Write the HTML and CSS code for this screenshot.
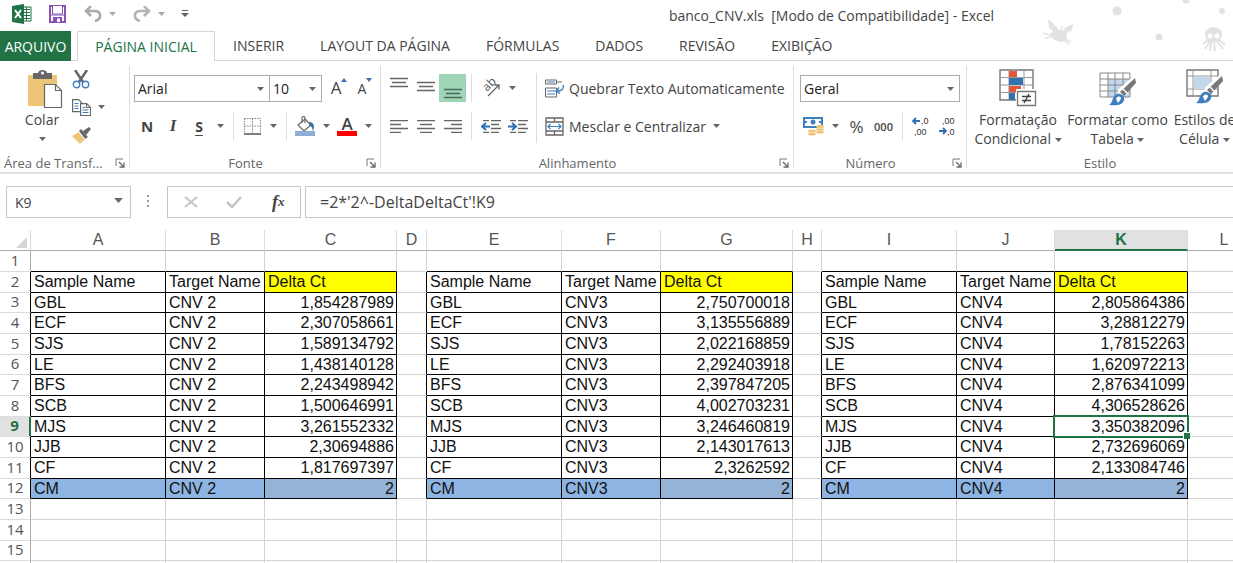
FILE: index.html
```html
<!DOCTYPE html>
<html lang="pt-BR">
<head>
<meta charset="utf-8">
<title>banco_CNV.xls - Excel</title>
<link rel="stylesheet" href="styles.css">
</head>
<body>
<svg class="defs" aria-hidden="true">
  <symbol id="caret" viewBox="0 0 7 4"><path d="M0 0h7L3.500 4z" fill="currentColor"/></symbol>
  <symbol id="launch" viewBox="0 0 10 10"><path d="M1 8V1h7" fill="none" stroke="#777" /><path d="M4 4l4 4M9 4.500V9H4.500" fill="none" stroke="#666" stroke-width="1.300"/></symbol>
  <symbol id="brush" viewBox="0 0 28 28"><path d="M27 0L12 14l4 4L28 5z" fill="#777"/><path d="M15 11l5 5" stroke="#fff" stroke-width="1.500"/><path d="M1 27c4-2 3-9 8-11 4-1 8 2 7 6-1 5-8 6-15 5z" fill="#3f7fbf"/><path d="M8 21c1-3 4-3 5-1 0 2-2 3-3 5z" fill="#fff"/></symbol>
</svg>

<header class="titlebar">
  <div class="quick">
    <svg class="q-logo" width="20" height="20" viewBox="0 0 20 20"><path d="M11 3h8v14h-8z" fill="#fff" stroke="#217346"/><path d="M11 5.500h7M11 8.500h7M11 11.500h7M11 14.500h7" stroke="#217346"/><path d="M14.500 3v14" stroke="#217346"/><path d="M0 2l12-2v20L0 18z" fill="#217346"/><path d="M3 6l6 8M9 6l-6 8" stroke="#fff" stroke-width="2"/></svg>
    <button class="q-save" aria-label="Salvar"><svg width="17" height="18" viewBox="0 0 17 18"><path d="M1 1h15v16H1z" fill="#fff" stroke="#8a52b3" stroke-width="2"/><path d="M3.500 1v8h10V1" fill="#fff" stroke="#8a52b3"/><path d="M1 10h15" stroke="#8a52b3"/><path d="M4 12h9v5H4z" fill="#8a52b3"/><path d="M8 13.500h3V17H8z" fill="#fff"/></svg></button>
    <button class="q-undo" aria-label="Desfazer"><svg width="18" height="16" viewBox="0 0 18 16"><path d="M7 0L2 5l5 5M2 5h8c8 0 8 8 1 10" fill="none" stroke="#aaa" stroke-width="2.600"/></svg><svg class="caret"><use href="#caret"/></svg></button>
    <button class="q-redo" aria-label="Refazer"><svg width="18" height="16" viewBox="0 0 18 16"><path d="M11 0l5 5-5 5M16 5H8C0 5 0 13 7 15" fill="none" stroke="#b4b4b4" stroke-width="2.600"/></svg><svg class="caret"><use href="#caret"/></svg></button>
    <button class="q-more" aria-label="Personalizar"><svg width="8" height="8" viewBox="0 0 8 8"><path d="M1 .500h6" stroke="#666"/><path d="M0 3h8L4 7z" fill="#666"/></svg></button>
  </div>
  <div class="title">banco_CNV.xls&nbsp; [Modo de Compatibilidade] - Excel</div>
  <svg class="doodle" width="193" height="60" viewBox="0 0 193 60" fill="#e2e2e2">
    <circle cx="77" cy="11" r="4.500"/><circle cx="146" cy="0" r="3.500"/><circle cx="182" cy="11" r="3"/><circle cx="119" cy="37" r="3.500"/>
    <path d="M10 35c2-5 10-7 16-3l1 7c-3 4-12 4-17-4z"/><path d="M15 31l-5-3-1-7 4 3 2 4zM24 31l2-3 6-3-1 5-6 3zM17 30l-1-4M21 30l1-4M10 35l-7-2M11 37l-6 1M25 39l6 3M23 40l6 4" stroke="#e2e2e2" stroke-width="1.500"/>
    <path d="M165 34c0-9 17-9 17 0 0 5-3 7-4 8h-9c-2-1-4-4-4-8z"/><path d="M169 41c0 5-3 5-4 8M171 42l-1 9M174 42l1 9M177 41c2 5 5 4 6 8M179 40l6 5M168 40l-5 4" fill="none" stroke="#e2e2e2" stroke-width="2"/><circle cx="170" cy="36" r="2.500" fill="#fff"/><circle cx="177" cy="36" r="2.500" fill="#fff"/>
  </svg>
</header>

<nav class="tabs">
  <button class="tab file">ARQUIVO</button>
  <button class="tab active">PÁGINA INICIAL</button>
  <button class="tab">INSERIR</button>
  <button class="tab">LAYOUT DA PÁGINA</button>
  <button class="tab">FÓRMULAS</button>
  <button class="tab">DADOS</button>
  <button class="tab">REVISÃO</button>
  <button class="tab">EXIBIÇÃO</button>
</nav>

<section class="ribbon">
  <div class="group clipboard">
    <div class="body clip-body">
      <button class="paste">
        <svg width="36" height="39" viewBox="0 0 36 39"><path d="M1 5h29v31H1z" fill="#eec477"/><path d="M6 3h5c0-4 9-4 9 0h5v6H6z" fill="#666"/><circle cx="15.500" cy="3" r="1.500" fill="#fff"/><path d="M17.500 14.500h11l6 6v17h-17z" fill="#fff" stroke="#666" stroke-width="1.200"/><path d="M28.500 14.500v6h6" fill="none" stroke="#666" stroke-width="1.200"/></svg>
        <span>Colar</span>
        <svg class="caret"><use href="#caret"/></svg>
      </button>
      <div class="clip-side">
        <button aria-label="Recortar"><svg width="18" height="19" viewBox="0 0 18 19"><path d="M3 0l8 12M15 0L7 12" stroke="#666" stroke-width="2.500"/><circle cx="4.500" cy="14.500" r="3.200" fill="#fff" stroke="#3f7fbf" stroke-width="1.400"/><circle cx="13.500" cy="14.500" r="3.200" fill="#fff" stroke="#3f7fbf" stroke-width="1.400"/></svg></button>
        <button aria-label="Copiar"><svg width="19" height="17" viewBox="0 0 19 17"><path d="M.600 .600h6l3 3v9h-9z" fill="#fff" stroke="#666" stroke-width="1.200"/><path d="M2.500 4.500h4M2.500 7h4M2.500 9.500h4" stroke="#3f7fbf"/><path d="M8.600 4.600h6l4 4v8h-10z" fill="#fff" stroke="#666" stroke-width="1.200"/><path d="M14.500 4.600v4h4" fill="none" stroke="#666"/><path d="M10.500 8.500h3M10.500 11h6M10.500 13.500h6" stroke="#3f7fbf"/></svg><svg class="caret"><use href="#caret"/></svg></button>
        <button aria-label="Pincel de Formatação"><svg width="19" height="17" viewBox="0 0 19 17"><path d="M0 9l7-4 6 7-5 5z" fill="#eec477"/><path d="M7 4l2-2 7 8-3 2z" fill="#666"/><path d="M11 4l6-4 2 2-5 6z" fill="#666"/><path d="M6.500 4.800l6.500 7.500" stroke="#fff"/></svg></button>
      </div>
    </div>
    <div class="caption left"><span>Área de Transf...</span><button class="launch" aria-label="Mais"><svg width="10" height="10"><use href="#launch"/></svg></button></div>
  </div>

  <div class="group font">
    <div class="body rows">
      <div class="row">
        <label class="combo face"><select aria-label="Fonte"><option>Arial</option></select><svg class="caret"><use href="#caret"/></svg></label>
        <label class="combo size"><select aria-label="Tamanho"><option>10</option></select><svg class="caret"><use href="#caret"/></svg></label>
        <button class="w26 after-combo" aria-label="Aumentar"><span class="grow">A</span><svg class="tri" width="6" height="4" viewBox="0 0 6 4"><path d="M0 4h6L3 0z" fill="#3f6fa8"/></svg></button>
        <button class="w26" aria-label="Diminuir"><span class="shrink">A</span><svg class="tri" width="6" height="4" viewBox="0 0 6 4"><path d="M0 0h6L3 4z" fill="#3f6fa8"/></svg></button>
      </div>
      <div class="row">
        <button class="w26 bold">N</button><button class="w26 ital">I</button><button class="w26 under">S</button>
        <button class="drop" aria-label="Sublinhado"><svg class="caret"><use href="#caret"/></svg></button>
        <i class="sep"></i>
        <button class="w26" aria-label="Bordas"><svg width="17" height="17" viewBox="0 0 17 17"><path d="M.500 .500h16v15M.500 .500v15M8.500 .500v15M.500 8h16" fill="none" stroke="#888" stroke-dasharray="1.500 1"/><path d="M0 16h17" stroke="#555" stroke-width="1.500"/></svg></button>
        <button class="drop" aria-label="Opções de borda"><svg class="caret"><use href="#caret"/></svg></button>
        <i class="sep"></i>
        <button class="w26" aria-label="Cor de preenchimento"><svg width="20" height="20" viewBox="0 0 20 20"><path d="M3 9l7-6 6 6-7 6z" fill="#fff" stroke="#666" stroke-width="1.200"/><path d="M7 7V2c0-2 3-2 3 0v5" fill="none" stroke="#666" stroke-width="1.200"/><path d="M14 6c5 0 6 4 4 9-1-4-2-5-4-6z" fill="#3f6fa8"/><path d="M0 15h20v5H0z" fill="#8eaed6"/></svg></button>
        <button class="drop" aria-label="Cores"><svg class="caret"><use href="#caret"/></svg></button>
        <button class="w26 fontcolor" aria-label="Cor da fonte"><span>A</span></button>
        <button class="drop" aria-label="Cores da fonte"><svg class="caret"><use href="#caret"/></svg></button>
      </div>
    </div>
    <div class="caption"><span>Fonte</span><button class="launch" aria-label="Mais"><svg width="10" height="10"><use href="#launch"/></svg></button></div>
  </div>

  <div class="group align">
    <div class="body align-body">
      <div class="rows">
        <div class="row">
          <button class="w27" aria-label="Em cima"><svg width="18" height="24" viewBox="0 0 18 24"><path d="M0 2.500h18M2 6.500h14M0 10.500h18" stroke="#666" stroke-width="1.300"/></svg></button>
          <button class="w27" aria-label="No meio"><svg width="18" height="24" viewBox="0 0 18 24"><path d="M0 6.500h18M2 10.500h14M0 14.500h18" stroke="#666" stroke-width="1.300"/></svg></button>
          <button class="w27 on" aria-label="Embaixo"><svg width="18" height="24" viewBox="0 0 18 24"><path d="M0 13.500h18M2 17.500h14M0 21.500h18" stroke="#4a6a57" stroke-width="1.300"/></svg></button>
          <i class="sep"></i>
          <button class="w27" aria-label="Orientação"><svg width="24" height="26" viewBox="0 0 24 26"><text x="0" y="0" class="ab" transform="translate(8 17) rotate(-45)">ab</text><path d="M9 21L20 10M15.500 10H20v4.500" fill="none" stroke="#666" stroke-width="1.300"/></svg></button>
          <button class="drop" aria-label="Orientações"><svg class="caret"><use href="#caret"/></svg></button>
        </div>
        <div class="row">
          <button class="w27" aria-label="À esquerda"><svg width="18" height="13" viewBox="0 0 18 13"><path d="M0 .700h18M0 4.500h11M0 8.500h18M0 12.300h11" stroke="#666" stroke-width="1.300"/></svg></button>
          <button class="w27" aria-label="Centralizar"><svg width="18" height="13" viewBox="0 0 18 13"><path d="M0 .700h18M3 4.500h12M0 8.500h18M3 12.300h12" stroke="#666" stroke-width="1.300"/></svg></button>
          <button class="w27" aria-label="À direita"><svg width="18" height="13" viewBox="0 0 18 13"><path d="M0 .700h18M7 4.500h11M0 8.500h18M7 12.300h11" stroke="#666" stroke-width="1.300"/></svg></button>
          <i class="sep"></i>
          <button class="w27" aria-label="Diminuir recuo"><svg width="20" height="13" viewBox="0 0 20 13"><path d="M2 .700h6M10 .700h10M10 4.500h8M10 8.500h10M2 12.300h6M10 12.300h8" stroke="#666" stroke-width="1.300"/><path d="M9 6.500H1M5 3L1 6.500 5 10" fill="none" stroke="#2f6fb5" stroke-width="2"/></svg></button>
          <button class="w27" aria-label="Aumentar recuo"><svg width="20" height="13" viewBox="0 0 20 13"><path d="M2 .700h6M10 .700h10M10 4.500h8M10 8.500h10M2 12.300h6M10 12.300h8" stroke="#666" stroke-width="1.300"/><path d="M0 6.500h8M4 3l4 3.500L4 10" fill="none" stroke="#2f6fb5" stroke-width="2"/></svg></button>
        </div>
      </div>
      <div class="rows wide">
        <div class="row"><button class="text"><svg width="20" height="19" viewBox="0 0 20 19"><path d="M.500 1h11v4H.500zM.500 9h11v9H.500z" fill="#fff" stroke="#666"/><path d="M11 3h6" stroke="#666"/><path d="M2 3h8M2 12h8M2 15h8" stroke="#3f7fbf"/><path d="M18.500 6c0 5-2 6-7 6M14 8.500L11 12l4 2.500" fill="none" stroke="#3f7fbf" stroke-width="1.400"/></svg>Quebrar Texto Automaticamente</button></div>
        <div class="row"><button class="text"><svg width="20" height="19" viewBox="0 0 20 19"><path d="M1 1h17v17H1zM1 5h17M1 14h17M9.500 1v4M9.500 14v4" fill="#fff" stroke="#666" stroke-width="1.300"/><path d="M3 9.500h13M5.500 7L3 9.500 5.500 12M13.500 7L16 9.500 13.500 12" fill="none" stroke="#3f7fbf" stroke-width="1.200"/></svg>Mesclar e Centralizar</button><button class="drop" aria-label="Mesclar"><svg class="caret"><use href="#caret"/></svg></button></div>
      </div>
    </div>
    <div class="caption"><span>Alinhamento</span><button class="launch" aria-label="Mais"><svg width="10" height="10"><use href="#launch"/></svg></button></div>
  </div>

  <div class="group number">
    <div class="body rows">
      <div class="row"><label class="combo format"><select aria-label="Formato"><option>Geral</option></select><svg class="caret"><use href="#caret"/></svg></label></div>
      <div class="row inset">
        <button class="w27" aria-label="Moeda"><svg width="21" height="19" viewBox="0 0 21 19"><path d="M1 1h18v9H1z" fill="#fff" stroke="#3f7fbf" stroke-width="2"/><circle cx="10" cy="5" r="2.500" fill="#3f7fbf"/><path d="M2 5h2M16 5h2" stroke="#3f7fbf" stroke-width="2"/><path d="M14 8h7v8h-7zM5 12h9v7H5z" fill="#fff"/><ellipse cx="17" cy="9.500" rx="4" ry="1.700" fill="#eec477"/><ellipse cx="17" cy="12.500" rx="4" ry="1.300" fill="#eec477"/><ellipse cx="17" cy="15.200" rx="4" ry="1.300" fill="#eec477"/><ellipse cx="9" cy="14" rx="4" ry="1.500" fill="#eec477"/><ellipse cx="9" cy="17.200" rx="4" ry="1.400" fill="#eec477"/></svg></button>
        <button class="drop" aria-label="Moedas"><svg class="caret"><use href="#caret"/></svg></button>
        <button class="w27 pct">%</button><button class="w27 zeros">000</button>
        <i class="sep"></i>
        <button class="w27" aria-label="Aumentar casas decimais"><svg width="20" height="24" viewBox="0 0 20 24"><path d="M8 7H1M4 4L1 7l3 3" fill="none" stroke="#2f6fb5" stroke-width="1.800"/><text x="9" y="10" class="dec">,0</text><text x="2" y="21" class="dec">,00</text></svg></button>
        <button class="w27" aria-label="Diminuir casas decimais"><svg width="20" height="24" viewBox="0 0 20 24"><path d="M0 17h7M4 14l3 3-3 3" fill="none" stroke="#2f6fb5" stroke-width="1.800"/><text x="3" y="10" class="dec">,00</text><text x="8" y="21" class="dec">,0</text></svg></button>
      </div>
    </div>
    <div class="caption"><span>Número</span><button class="launch" aria-label="Mais"><svg width="10" height="10"><use href="#launch"/></svg></button></div>
  </div>

  <div class="group style">
    <div class="body style-body">
      <button class="big b1"><svg width="38" height="38" viewBox="0 0 38 38"><path d="M1 1h33v30H1z" fill="#fff" stroke="#777" stroke-width="1.400"/><path d="M1 8.500h33M1 16h33M1 23.500h33M10 1v30M25 1v30" stroke="#999"/><path d="M10 2h8v6h-8zM10 17h12v6H10z" fill="#e0573a"/><path d="M10 9h14v7H10zM10 24h6v7h-6z" fill="#3572b0"/><path d="M17 20h21v18H17z" fill="#fff"/><path d="M18.500 22.500h18v14h-18z" fill="#fff" stroke="#777" stroke-width="1.300"/><path d="M23 27.500h9M23 31.500h9M30 25l-5 9" stroke="#444" stroke-width="1.500"/></svg><span>Formatação<br>Condicional <svg class="caret"><use href="#caret"/></svg></span></button>
      <button class="big b2"><svg width="38" height="38" viewBox="0 0 38 38"><path d="M1 4h30v24H1z" fill="#fff"/><path d="M9 10h22v18H9z" fill="#c3d7ec"/><path d="M1 4h30v24H1zM1 10h30M1 16h30M1 22h30M9 4v24M16 4v24M24 4v24" fill="none" stroke="#888"/><path d="M36 10L22 22l-2 8" fill="none" stroke="#fff" stroke-width="6"/><use href="#brush" x="9" y="9" width="28" height="28"/></svg><span>Formatar como<br>Tabela <svg class="caret"><use href="#caret"/></svg></span></button>
      <button class="big b3"><svg width="38" height="38" viewBox="0 0 38 38"><path d="M1 1h31v26H1z" fill="#fff" stroke="#777" stroke-width="1.400"/><path d="M1 7h31M1 20h31M7 1v26M25 1v26" stroke="#999"/><path d="M8 8h16v12H8z" fill="#c3d7ec"/><path d="M36 8L22 20l-2 8" fill="none" stroke="#fff" stroke-width="6"/><use href="#brush" x="9" y="7" width="28" height="28"/></svg><span>Estilos de<br>Célula <svg class="caret"><use href="#caret"/></svg></span></button>
    </div>
    <div class="caption"><span>Estilo</span></div>
  </div>
</section>

<section class="formula-bar">
  <label class="namebox"><input value="K9" aria-label="Caixa de nome"><svg class="caret"><use href="#caret"/></svg></label>
  <svg class="dots" width="3" height="14" viewBox="0 0 3 14" fill="#999"><path d="M0 0h2v2H0zM0 5h2v2H0zM0 10h2v2H0z"/></svg>
  <div class="fx-box">
    <button aria-label="Cancelar"><svg width="14" height="12" viewBox="0 0 14 12"><path d="M1 1l12 10M13 1L1 11" stroke="#c4c4c4" stroke-width="2"/></svg></button>
    <button aria-label="Inserir"><svg width="16" height="12" viewBox="0 0 16 12"><path d="M1 6l5 5L15 1" fill="none" stroke="#c4c4c4" stroke-width="2.500"/></svg></button>
    <button class="fx" aria-label="Inserir função"><i>f</i><sub>x</sub></button>
  </div>
  <input class="formula" value="=2*'2^-DeltaDeltaCt'!K9" aria-label="Barra de fórmulas">
</section>

<main class="sheet"><table id="grid"></table></main>
<script src="grid.js"></script>
</body>
</html>
```

FILE: styles.css
```css
* { box-sizing: border-box; }
body { margin: 0; background: #fff; color: #444; font: 14px "Open Sans", "Noto Sans", sans-serif; overflow: hidden; height: 100vh; display: flex; flex-direction: column; }
button { border: 0; margin: 0; padding: 0; background: none; color: inherit; font: inherit; display: flex; align-items: center; justify-content: center; flex: none; }
svg { flex: none; display: block; }
.defs { position: absolute; width: 0; height: 0; }
.caret { width: 7px; height: 4px; color: #666; }

.titlebar { position: relative; height: 31px; display: flex; align-items: center; flex: none; }
.quick { width: 430px; display: flex; align-items: center; padding: 0 0 4px 12px; flex: none; }
.quick button { gap: 7px; color: #aaa; }
.quick .caret { color: #aaa; }
.quick .q-save { margin-left: 17px; }
.quick .q-undo { margin-left: 18px; }
.quick .q-redo { margin-left: 17px; }
.quick .q-more { margin-left: 16px; }
.title { flex: 1; text-align: center; white-space: nowrap; }
.doodle { position: absolute; right: 0; top: 0; z-index: -1; }

.tabs { display: flex; height: 30px; border-bottom: 1px solid #d5d5d5; flex: none; }
.tab { padding: 0 18px; white-space: nowrap; height: 29px; }
.tab.file { width: 71px; padding: 0; background: #217346; color: #fff; height: 30px; margin-right: 6px; }
.tab.active { width: 138px; padding: 0; color: #217346; background: #fff; border: 1px solid #d5d5d5; border-bottom: 0; height: 30px; }

.ribbon { display: flex; height: 113px; border-bottom: 2px solid #e1e1e1; flex: none; }
.group { display: flex; flex-direction: column; position: relative; flex: none; padding-top: 4px; }
.group:not(.style)::after { content: ""; position: absolute; right: 0; top: 5px; bottom: 4px; width: 1px; background: #dcdcdc; }
.body { height: 89px; }
.caption { display: flex; align-items: center; height: 18px; color: #666; font-size: 13px; white-space: nowrap; }
.caption span { flex: 1; text-align: center; }
.caption.left span { text-align: left; padding-left: 4px; }
.launch { width: 20px; height: 18px; }
.clipboard { width: 130px; }
.font { width: 251px; }
.align { width: 413px; }
.number { width: 173px; }
.style { flex: 1; min-width: 0; overflow: hidden; }
.rows { padding: 4px 0 0 4px; }
.row { display: flex; align-items: center; height: 38px; }
.inset { padding-left: 2px; }
.sep { width: 1px; height: 28px; background: #dcdcdc; margin: 0 5px; flex: none; }
.w26 { width: 26px; height: 28px; }
.w27 { width: 27px; height: 28px; }
.drop { width: 16px; height: 28px; }

.clip-body { display: flex; padding-left: 14px; }
.paste { flex-direction: column; width: 56px; justify-content: flex-start; padding-top: 5px; }
.paste svg:first-child { margin-left: 6px; }
.paste span { line-height: 22px; }
.paste .caret { margin-top: 6px; }
.clip-side { display: flex; flex-direction: column; padding: 0 0 0 2px; }
.clip-side button { height: 28px; gap: 7px; justify-content: flex-start; }

.combo { position: relative; display: block; height: 27px; color: #222; }
.combo select { appearance: none; width: 100%; height: 100%; border: 1px solid #ababab; border-radius: 0; background: #fff; font: inherit; color: inherit; padding: 0 3px; }
.combo .caret { position: absolute; right: 6px; top: 12px; }
.face { width: 136px; }
.size { width: 53px; margin-left: -1px; }
.format { width: 160px; margin-left: 2px; }
.after-combo { margin-left: 4px; }
.grow { font-size: 17px; line-height: 20px; }
.shrink { font-size: 14px; }
.tri { align-self: flex-start; margin-top: 4px; }
.bold { font-weight: 700; font-size: 15px; }
.ital { font: italic 700 17px "Liberation Serif", serif; }
.under { font-weight: 700; text-decoration: underline; text-underline-offset: 3px; }
.fontcolor span { font-weight: 600; font-size: 17px; line-height: 15px; border-bottom: 5px solid #f00; width: 20px; }
.on { background: #9fd5b7; }
.ab { font: 12px "Open Sans", sans-serif; fill: #555; }
.dec { font: 9px "Liberation Sans", sans-serif; fill: #333; }
.pct { font-size: 17px; }
.zeros { font-size: 11px; font-weight: 600; }
.align-body { display: flex; }
.align-body .rows:first-child { width: 155px; }
.align-body .rows.wide { position: relative; padding-left: 9px; }
.wide::before { content: ""; position: absolute; left: 0; top: 8px; height: 70px; width: 1px; background: #dcdcdc; }
.text { gap: 4px; white-space: nowrap; }
.wide .drop { margin-left: 3px; }
.style-body { display: flex; padding-left: 4px; }
.big { flex-direction: column; justify-content: flex-start; padding-top: 4px; line-height: 19px; white-space: nowrap; }
.big span { margin-top: 3px; }
.big span .caret { display: inline-block; vertical-align: middle; }
.b1 { width: 94px; }
.b2 { width: 105px; }
.b3 { width: 69px; }

.formula-bar { display: flex; align-items: center; height: 56px; padding: 0 0 0 6px; flex: none; }
.namebox { position: relative; width: 125px; height: 32px; }
.namebox input, .formula, .fx-box { height: 32px; border: 1px solid #c6c6c6; background: #fff; font: inherit; color: inherit; }
.namebox input { width: 100%; padding: 0 8px; }
.namebox .caret { position: absolute; right: 8px; top: 12px; width: 9px; height: 5px; }
.dots { margin: 0 17px 0 16px; }
.fx-box { width: 134px; display: flex; justify-content: space-around; align-items: center; padding: 0 0 0 1px; }
.fx-box button { width: 40px; }
.fx i { font: italic 700 18px "Liberation Serif", serif; }
.fx sub { font: italic 700 13px "Liberation Serif", serif; }
.formula-bar .formula { flex: 1; min-width: 0; margin-left: 4px; padding: 0 14px; border-right: 0; font-size: 16px; }

.sheet { flex: 1; min-height: 0; overflow: hidden; }
#grid { border-collapse: separate; border-spacing: 0; table-layout: fixed; width: 1261px; font: 16px "Liberation Sans", Arial, sans-serif; color: #111; }
#grid th { font-weight: 400; color: #555; padding: 0; border-right: 1px solid #dcdcdc; border-bottom: 1px solid #ababab; }
#grid thead tr { height: 21px; }
#grid tbody tr { height: 21px; line-height: 18px; }
#grid tbody tr:nth-child(3n) { height: 20px; }
#grid tbody th { font: 15px "Open Sans", sans-serif; line-height: 17px; padding-bottom: 2px; border-right-color: #ababab; border-bottom-color: #dcdcdc; }
#grid td { padding: 0 3px; border-right: 1px solid #d4d4d4; border-bottom: 1px solid #d4d4d4; white-space: nowrap; }
#grid td.box { border-right-color: #000; border-bottom-color: #000; }
#grid td.edge-right, #grid th.edge-right { border-right-color: #000; }
#grid td.edge-bottom { border-bottom-color: #000; }
#grid td.num { text-align: right; padding-right: 2px; }
#grid td.yellow { background: #ff0; }
#grid td.blue { background: #8db4e2; }
#grid td.blue.num { background: #95b3d7; }
#grid th.sel { background: #e1e1e1; color: #217346; font-weight: 700; }
#grid thead th.sel { border-bottom: 2px solid #217346; }
#grid tbody th.sel { border-right: 2px solid #217346; }
#grid td.cursor { position: relative; }
#grid td.cursor::before { content: ""; position: absolute; inset: -2px; border: 2px solid #217346; }
#grid td.cursor::after { content: ""; position: absolute; right: -3px; bottom: -3px; width: 6px; height: 6px; background: #217346; border: 1px solid #fff; border-width: 1px 0 0 1px; }
.corner svg { margin: 4px 3px 0 auto; }
```

FILE: grid.js
```js
const widths = [31, 135, 99, 132, 30, 135, 99, 132, 29, 135, 98, 133, 73];
const samples = ["GBL", "ECF", "SJS", "LE", "BFS", "SCB", "MJS", "JJB", "CF", "CM"];
const blocks = [
  { col: 0, target: "CNV 2", values: ["1,854287989", "2,307058661", "1,589134792", "1,438140128", "2,243498942", "1,500646991", "3,261552332", "2,30694886", "1,817697397", "2"] },
  { col: 4, target: "CNV3", values: ["2,750700018", "3,135556889", "2,022168859", "2,292403918", "2,397847205", "4,002703231", "3,246460819", "2,143017613", "2,3262592", "2"] },
  { col: 8, target: "CNV4", values: ["2,805864386", "3,28812279", "1,78152263", "1,620972213", "2,876341099", "4,306528626", "3,350382096", "2,732696069", "2,133084746", "2"] }
];

function cell(row, col) {
  const part = col % 4;
  const inRows = row >= 2 && row <= 12;
  if (part === 3 || col > 10) {
    return { text: "", cls: inRows && (col === 3 || col === 7) ? "edge-right" : "" };
  }
  const block = blocks[Math.floor(col / 4)];
  if (row === 1) return { text: "", cls: "edge-bottom" };
  if (!inRows) return { text: "", cls: "" };
  if (row === 2) {
    return { text: ["Sample Name", "Target Name", "Delta Ct"][part], cls: part === 2 ? "box yellow" : "box" };
  }
  const i = row - 3;
  let cls = "box";
  if (part === 2) cls += " num";
  if (row === 12) cls += " blue";
  if (row === 9 && col === 10) cls += " cursor";
  return { text: [samples[i], block.target, block.values[i]][part], cls };
}

let html = "<colgroup>" + widths.map(w => `<col style="width:${w}px">`).join("") + "</colgroup><thead><tr>";
html += '<th class="corner"><svg width="11" height="11" viewBox="0 0 11 11"><path d="M11 0v11H0z" fill="#d5d5d5"/></svg></th>';
for (const letter of "ABCDEFGHIJKL") {
  html += `<th class="${letter === "K" ? "sel" : ""}">${letter}</th>`;
}
html += "</tr></thead><tbody>";
for (let row = 1; row <= 16; row++) {
  const cls = row === 9 ? "sel" : row >= 2 && row <= 12 ? "edge-right" : "";
  html += `<tr><th class="${cls}">${row}</th>`;
  for (let col = 0; col < 12; col++) {
    const c = cell(row, col);
    html += `<td class="${c.cls}">${c.text}</td>`;
  }
  html += "</tr>";
}
document.getElementById("grid").innerHTML = html + "</tbody>";
```
